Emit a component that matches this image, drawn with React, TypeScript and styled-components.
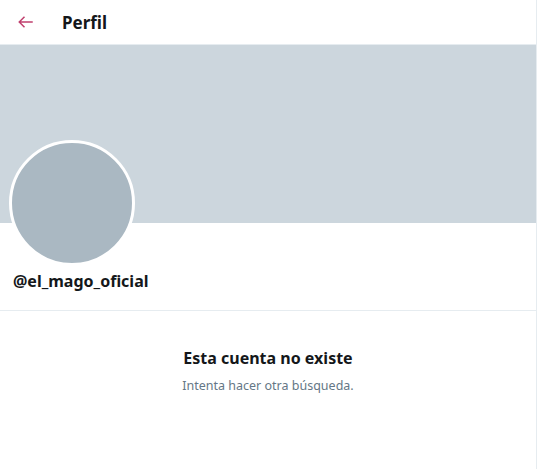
import React from "react";
import styled, { createGlobalStyle } from "styled-components";

const GlobalStyle = createGlobalStyle`
  body {
    margin: 0;
    background: #ffffff;
    font-family: "Noto Sans", "Open Sans", sans-serif;
  }
`;

const Page = styled.div`
  width: 536px;
  min-height: 469px;
  border-right: 1px solid #e6ecf0;
  box-sizing: content-box;
`;

const Header = styled.header`
  display: flex;
  align-items: center;
  height: 44px;
  padding-left: 17px;
  border-bottom: 1px solid #e6ecf0;
`;

const BackButton = styled.button`
  display: flex;
  align-items: center;
  justify-content: center;
  padding: 0;
  border: none;
  background: none;
  width: 18px;
  height: 18px;
  color: #c0406e;
  cursor: pointer;
`;

const Title = styled.h1`
  margin: 0 0 0 27px;
  font-size: 17px;
  font-weight: 700;
  color: #14171a;
`;

const Banner = styled.div`
  height: 178px;
  background: #ccd6dd;
`;

const ProfileInfo = styled.div`
  display: flex;
  flex-direction: column;
  align-items: flex-start;
  padding: 0 13px;
  height: 87px;
  border-bottom: 1px solid #e6ecf0;
`;

const Avatar = styled.div`
  flex: none;
  width: 120px;
  height: 120px;
  margin: -83px 0 0 -4px;
  border-radius: 50%;
  border: 3px solid #ffffff;
  background: #aab8c2;
`;

const Handle = styled.div`
  margin-top: 4px;
  font-size: 16px;
  font-weight: 700;
  color: #14171a;
`;

const Empty = styled.div`
  display: flex;
  flex-direction: column;
  align-items: center;
  padding-top: 36px;
`;

const EmptyTitle = styled.div`
  font-size: 16px;
  font-weight: 700;
  color: #14171a;
`;

const EmptyText = styled.div`
  margin-top: 8px;
  font-size: 12.5px;
  color: #657786;
`;

export default function App() {
  return (
    <>
      <GlobalStyle />
      <Page>
        <Header>
          <BackButton aria-label="Atrás">
            <svg width="18" height="18" viewBox="0 0 24 24" fill="none" stroke="currentColor" strokeWidth="2">
              <path d="M21 12H3.5M10 5l-7 7 7 7" />
            </svg>
          </BackButton>
          <Title>Perfil</Title>
        </Header>
        <Banner />
        <ProfileInfo>
          <Avatar />
          <Handle>@el_mago_oficial</Handle>
        </ProfileInfo>
        <Empty>
          <EmptyTitle>Esta cuenta no existe</EmptyTitle>
          <EmptyText>Intenta hacer otra búsqueda.</EmptyText>
        </Empty>
      </Page>
    </>
  );
}
